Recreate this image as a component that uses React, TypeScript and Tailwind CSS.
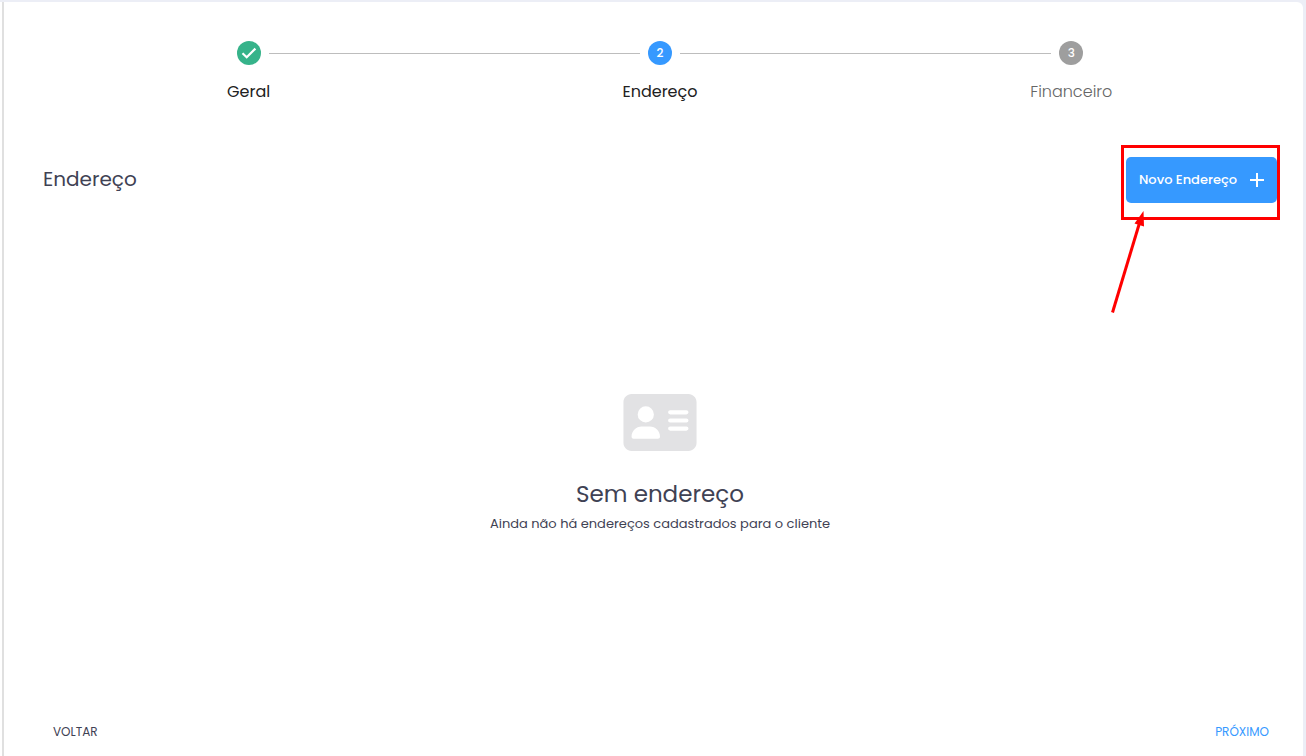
import React from 'react';
import { FaAddressCard } from 'react-icons/fa6';
import { MdAdd } from 'react-icons/md';

type StepStatus = 'done' | 'active' | 'pending';

interface Step {
  label: string;
  status: StepStatus;
}

const steps: Step[] = [
  { label: 'Geral', status: 'done' },
  { label: 'Endereço', status: 'active' },
  { label: 'Financeiro', status: 'pending' },
];

const circleColors: Record<StepStatus, string> = {
  done: 'bg-[#36b38a]',
  active: 'bg-[#3699ff]',
  pending: 'bg-[#9e9e9e]',
};

const CheckIcon: React.FC = () => (
  <svg className="h-6 w-6" viewBox="0 0 24 24" fill="none" aria-hidden="true">
    <path d="M5.5 12.3 9.7 16.3 18.4 7.6" stroke="currentColor" strokeWidth="2.2" />
  </svg>
);

const Stepper: React.FC = () => (
  <ol className="flex">
    {steps.map((step, index) => (
      <li
        key={step.label}
        className="flex flex-1 flex-col items-center gap-4"
        aria-current={step.status === 'active' ? 'step' : undefined}
      >
        <div className="flex w-full items-center gap-2">
          <span className={`h-px flex-1 ${index > 0 ? 'bg-[#bdbdbd]' : ''}`} />
          <span
            className={`flex h-6 w-6 items-center justify-center rounded-full text-xs font-medium text-white ${circleColors[step.status]}`}
          >
            {step.status === 'done' ? <CheckIcon /> : index + 1}
          </span>
          <span className={`h-px flex-1 ${index < steps.length - 1 ? 'bg-[#bdbdbd]' : ''}`} />
        </div>
        <span
          className={`text-base leading-[22px] ${
            step.status === 'pending' ? 'font-light text-[#666666]' : 'text-[#212121]'
          }`}
        >
          {step.label}
        </span>
      </li>
    ))}
  </ol>
);

const NewAddressButton: React.FC = () => (
  <div className="relative">
    <button
      type="button"
      className="flex h-[46px] w-[151px] items-center justify-between rounded-[5px] bg-[#3699ff] pr-2 pl-[13px] text-[13px] font-medium text-white"
    >
      Novo Endereço
      <MdAdd className="h-6 w-6" />
    </button>

    {/* Highlight box and arrow */}
    <div className="pointer-events-none absolute -top-3 -right-[3px] -left-[5px] h-[75px] border-3 border-[#ff0000]" />
    <svg
      className="pointer-events-none absolute top-[52px] -left-4 h-[106px] w-9"
      viewBox="0 0 36 106"
      aria-hidden="true"
    >
      <path d="M2.5 103.5 29.5 14" stroke="#ff0000" strokeWidth="3" fill="none" />
      <path d="M33.5 2 34 17.5 24.5 14.5Z" fill="#ff0000" />
    </svg>
  </div>
);

const EmptyState: React.FC = () => (
  <div className="flex flex-1 flex-col items-center pt-[187px] text-center text-[#3f4254]">
    <FaAddressCard className="h-[65px] w-[74px] text-[#e2e2e4]" />
    <h2 className="mt-[23px] text-[23px] leading-8">Sem endereço</h2>
    <p className="mt-[5px] text-[13px] leading-[18px]">
      Ainda não há endereços cadastrados para o cliente
    </p>
  </div>
);

const App: React.FC = () => {
  return (
    <div className="flex min-h-screen bg-[#eceef6] pt-0.5 pr-[3px] font-[Poppins,Inter,sans-serif]">
      <div className="w-0.5 bg-white" />
      <main className="flex flex-1 flex-col rounded-tr-md border-l-2 border-[#e0e0e0] bg-white pt-[39px] pr-[26px] pb-3 pl-[39px]">
        <Stepper />

        <div className="mt-[54px] flex items-center justify-between">
          <h1 className="pb-0.5 text-xl text-[#3f4254]">Endereço</h1>
          <NewAddressButton />
        </div>

        <EmptyState />

        <div className="flex justify-between pr-2 pl-2.5 text-xs leading-6">
          <button type="button" className="text-[#3f4254]">
            VOLTAR
          </button>
          <button type="button" className="text-[#3699ff]">
            PRÓXIMO
          </button>
        </div>
      </main>
    </div>
  );
};

export default App;
